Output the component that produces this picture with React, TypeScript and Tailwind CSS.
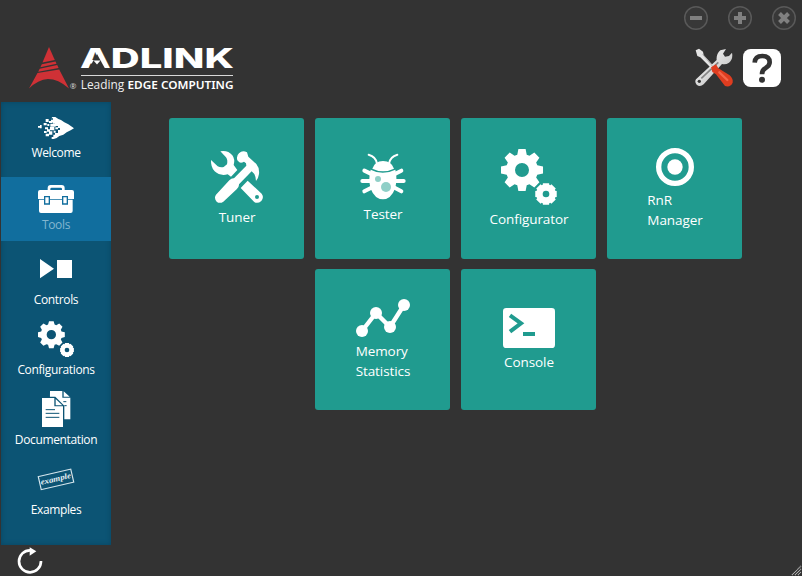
import React from "react";

type IconProps = { box: string; className: string; children: React.ReactNode };

function Icon({ box, className, children }: IconProps) {
  return (
    <svg viewBox={box} className={"block shrink-0 " + className} fill="white">
      {children}
    </svg>
  );
}

function gearPath(cx: number, cy: number, outer: number, inner: number, hole: number, tip: number, root: number) {
  const pts: string[] = [];
  for (let i = 0; i < 8; i++) {
    const a = (i * Math.PI) / 4;
    const steps: [number, number][] = [[-root, inner], [-tip, outer], [tip, outer], [root, inner]];
    for (const [d, r] of steps) {
      pts.push((cx + r * Math.cos(a + d)).toFixed(2) + " " + (cy + r * Math.sin(a + d)).toFixed(2));
    }
  }
  return `M${pts.join("L")}Z M${cx - hole} ${cy}a${hole} ${hole} 0 1 0 ${hole * 2} 0a${hole} ${hole} 0 1 0 ${-hole * 2} 0Z`;
}

const WelcomeIcon = () => (
  <Icon box="114 60 108 72" className="h-[24px] w-[36px]">
    <path d="M157 63h9l9 6 8 3 10 7 12 6 17 12-10 6-12 6-10 7-12 4-8 6-9 3h-6v-6h5v-7h5v-5h9v-9h6v-6h-6v-6h-9v-7h-6v-5h-6v-7h6v-4h-5Z" />
    <path d="M137 69h9v9h-9zM147 75h11v6h-11zM131 81h9v7h-9zM142 84h6v6h-6zM151 83h16v9h-16zM114 90h8v5h-8zM120 87h5v10h-5zM135 94h9v6h-9zM150 93h13v10h-13zM141 100h9v7h-9zM132 105h8v6h-8zM147 106h10v10h-10zM137 113h10v8h-10zM161 104h6v6h-6zM166 94h8v6h-8z" />
  </Icon>
);

const ToolboxIcon = () => (
  <Icon box="114 267 108 84" className="h-[28px] w-[36px]">
    <path d="M143 285v-9q0-9 9-9h33q9 0 9 9v9h-8v-6q0-4-4-4h-27q-4 0-4 4v6Z" />
    <path d="M120 282h96q6 0 6 6v21h-18v-9h-18v9h-36v-9h-18v9h-18v-21q0-6 6-6Z" />
    <path d="M117 311h15v15h18v-15h36v15h18v-15h14v34q0 6-6 6h-89q-6 0-6-6Z" />
    <path d="M136 304h10v18h-10zM190 304h10v18h-10z" />
  </Icon>
);

const ControlsIcon = () => (
  <Icon box="114 54 108 63" className="h-[21px] w-[36px]">
    <path d="M120 57l42 29-42 29zM171 60h45v54h-45z" />
  </Icon>
);

const SmallGears = () => (
  <Icon box="114 240 111 114" className="h-[38px] w-[37px]">
    <path fillRule="evenodd" d={gearPath(154, 284, 41, 32, 14, 0.17, 0.31)} />
    <path fillRule="evenodd" d={gearPath(201, 330, 21.5, 19.5, 7, 0.28, 0.34)} />
  </Icon>
);

const DocumentsIcon = () => (
  <Icon box="126 33 87 108" className="h-[36px] w-[29px]">
    <path d="M150 33h37v20h24v65h-62zM191 34l18 16h-18z" />
    <path d="M123 50h43l27 27v67h-70z" fill="#0c5474" />
    <path d="M126 54h37v25h26v62h-63zM167 57l20 19h-20z" />
    <path d="M137 89h28M137 100h41M137 112h41M190 65h9M193 77h7" stroke="#0c5474" strokeWidth="3" />
  </Icon>
);

const ExampleIcon = () => (
  <Icon box="114 261 108 75" className="h-[25px] w-[36px] overflow-visible">
    <g transform="rotate(-13 168 298)">
      <rect x="118" y="278" width="100" height="40" fill="none" stroke="#d5e6ed" strokeWidth="3.5" />
      <text x="121" y="304" fontSize="24" fontStyle="italic" fontWeight="700" fontFamily="Liberation Serif, serif" textLength="93" lengthAdjust="spacingAndGlyphs" fill="#e5f0f4">example</text>
    </g>
  </Icon>
);

const TunerIcon = () => (
  <Icon box="150 120 162 162" className="size-[54px]">
    <path d="M181 124Q204 120 217 136Q226 148 221 165L232 180L213 200L203 193Q180 199 164 184Q152 172 153 150L173 169Q181 173 191 171L201 163Q204 150 198 142Z" />
    <path fillRule="evenodd" d="M263 212L305 251Q313 262 304 273Q292 283 282 275L242 234ZM285 261a6 6 0 1 0 12 0a6 6 0 1 0-12 0Z" />
    <path d="M232 151Q228 138 237 130Q247 119 261 127L265 140L289 162Q299 174 297 192Q295 206 288 213Q287 199 283 192L275 184L237 223Q238 230 230 238L190 275Q179 282 170 275Q161 265 168 254L208 211Q215 204 222 205L259 167L258 160L252 155Q244 160 238 157Z" />
  </Icon>
);

const BugIcon = () => (
  <Icon box="150 129 138 141" className="h-[47px] w-[46px]">
    <path d="M176 134Q198 140 201 161M262 134Q240 140 237 161" fill="none" stroke="white" strokeWidth="6" strokeLinecap="round" />
    <path d="M187 176Q194 154 219 153Q245 154 252 176Q219 192 187 176Z" />
    <path d="M163 182L188 194M157 213H184M163 244L187 232M274 182L250 194M281 213H254M274 244L251 232" stroke="white" strokeWidth="12" strokeLinecap="round" />
    <path d="M182 179Q218 198 256 179Q263 205 255 236Q243 267 219 268Q194 267 182 236Q174 205 182 179Z" />
    <circle cx="204" cy="207" r="9" fill="#8fcfc7" />
    <circle cx="228" cy="231" r="15" fill="#8fcfc7" />
  </Icon>
);

const LargeGears = () => (
  <Icon box="135 114 174 174" className="size-[58px]">
    <path fillRule="evenodd" d={gearPath(201, 180, 64, 48, 21, 0.17, 0.3)} />
    <path fillRule="evenodd" d={gearPath(273, 252, 33.5, 29.5, 10, 0.28, 0.34)} />
  </Icon>
);

const TargetIcon = () => (
  <Icon box="165 111 120 120" className="size-[40px]">
    <circle cx="225" cy="171" r="49" fill="none" stroke="white" strokeWidth="16" />
    <circle cx="225" cy="171" r="23" />
  </Icon>
);

const GraphIcon = () => (
  <Icon box="135 108 168 120" className="h-[40px] w-[56px]">
    <path d="M156 207L198 153L240 195L282 129" fill="none" stroke="white" strokeWidth="13" />
    <circle cx="156" cy="207" r="18" />
    <circle cx="198" cy="153" r="18" />
    <circle cx="240" cy="195" r="18" />
    <circle cx="282" cy="129" r="18" />
  </Icon>
);

const ConsoleIcon = () => (
  <Icon box="144 138 156 120" className="h-[40px] w-[52px]">
    <rect x="144" y="138" width="156" height="120" rx="10" />
    <path d="M165 160L198 184L165 209" fill="none" stroke="#209b8f" strokeWidth="12" />
    <path d="M204 210h36v12h-36z" fill="#209b8f" />
  </Icon>
);

const Logo = () => (
  <svg viewBox="28 30 208 66" className="h-[66px] w-[208px]" fontFamily="Open Sans, sans-serif">
    <g fill="#cf3136">
      <path d="M49 47L54.8 60L42.5 62.5Z" />
      <path d="M41.8 64.2L55.5 61.5L56.5 63.7L40.4 67.3Z" />
      <path d="M39.7 68.7L57.2 65L58.6 68L38.2 71.7Z" />
      <path d="M37.5 73L59.2 69.5L69 88.4Q58 79 48 79Q38 79.5 29 88.6Z" />
    </g>
    <text x="80" y="68" fontSize="27.2" fontWeight="800" fill="white" fontFamily="Inter, sans-serif" textLength="154" lengthAdjust="spacingAndGlyphs">ADLINK</text>
    <path d="M97 54L89 68.5H105Z" fill="#333333" />
    <path d="M93.5 60.5H100.5L97 64.5Z" fill="white" />
    <path d="M81 75.5H233" stroke="#d8d8d8" strokeWidth="1" />
    <text x="69.7" y="88.5" fontSize="8" fill="#ddd">®</text>
    <text x="80.7" y="89" fontSize="12" fill="#eee" textLength="43.5" lengthAdjust="spacingAndGlyphs">Leading</text>
    <text x="127.5" y="89" fontSize="11.5" fontWeight="600" fill="white" fontFamily="Noto Sans, sans-serif" textLength="106" lengthAdjust="spacingAndGlyphs">EDGE COMPUTING</text>
  </svg>
);

const WindowButton = ({ d }: { d: string }) => (
  <svg viewBox="0 0 26 26" className="size-[26px]">
    <circle cx="13" cy="13" r="11.3" fill="#383838" stroke="#595959" strokeWidth="1.5" />
    <path d={d} stroke="#808080" strokeWidth="4" fill="none" />
  </svg>
);

const SettingsIcon = () => (
  <svg viewBox="105 144 117 120" className="h-[40px] w-[39px]">
    <defs>
      <linearGradient id="steel" x1="0" y1="0" x2="1" y2="1">
        <stop offset="0" stopColor="#fff" />
        <stop offset="1" stopColor="#b5b5b5" />
      </linearGradient>
    </defs>
    <path d="M108 238L170 180Q168 163 181 151L198 147L189 161L195 170L207 168L216 158Q220 177 207 188Q197 195 186 192L131 253Q120 262 110 254Q103 246 108 238Z" fill="url(#steel)" />
    <path d="M124 235L175 187" stroke="#858585" strokeWidth="5" />
    <circle cx="118" cy="244" r="5" fill="#333" />
    <path d="M107 151L117 146L129 155L131 165L166 204L159 210L121 172L112 168Z" fill="#e4e4e4" />
    <path d="M128 163L162 204" stroke="#969696" strokeWidth="2" />
    <path d="M153 202L168 193L175 205L209 226Q220 236 218 248Q211 263 195 258L168 223L157 216Z" fill="#df3d20" />
    <path d="M178 217L202 240" stroke="#f56549" strokeWidth="7" strokeLinecap="round" />
  </svg>
);

const HelpIcon = () => (
  <svg viewBox="249 147 114 114" className="size-[38px]">
    <rect x="249" y="147" width="114" height="114" rx="23" fill="white" />
    <path d="M284 188Q285 168 307 168Q329 168 329 187Q329 197 317 204Q306 210 306 223" fill="none" stroke="#333" strokeWidth="14" />
    <circle cx="306" cy="239" r="9" fill="#333" />
  </svg>
);

const navigation = [
  { label: "Welcome", icon: <WelcomeIcon />, row: "h-[75px] pt-[14px]", gap: "mt-[3px]" },
  { label: "Tools", icon: <ToolboxIcon />, row: "h-[64px] bg-[#116e9e] pt-[8px] text-[#83b6cf]", gap: "mt-[2px]" },
  { label: "Controls", icon: <ControlsIcon />, row: "h-[69px] pt-[17px]", gap: "mt-[11px]" },
  { label: "Configurations", icon: <SmallGears />, row: "h-[70px] pt-[10px]", gap: "mt-[2px]" },
  { label: "Documentation", icon: <DocumentsIcon />, row: "h-[70px] pt-[11px]", gap: "mt-[3px]" },
  { label: "Examples", icon: <ExampleIcon />, row: "h-[70px] pt-[17px]", gap: "mt-[8px]" },
];

const tools = [
  [
    { label: "Tuner", icon: <TunerIcon />, pad: "pt-[32px]", gap: "mt-[3px]" },
    { label: "Tester", icon: <BugIcon />, pad: "pt-[35px]", gap: "mt-[4px]" },
    { label: "Configurator", icon: <LargeGears />, pad: "pt-[30px]", gap: "mt-[3px]" },
    { label: "RnR\nManager", icon: <TargetIcon />, pad: "pt-[29px]", gap: "mt-[3px]" },
  ],
  [
    { label: "Memory\nStatistics", icon: <GraphIcon />, pad: "pt-[29px]", gap: "mt-[3px]" },
    { label: "Console", icon: <ConsoleIcon />, pad: "pt-[39px]", gap: "mt-[4px]" },
  ],
];

export default function App() {
  return (
    <div className="flex h-[576px] w-[802px] flex-col overflow-hidden bg-[#333333] font-['Open_Sans',sans-serif] text-white">
      <header className="flex h-[102px] shrink-0 justify-between pl-[28px]">
        <div className="pt-[30px]"><Logo /></div>
        <div className="flex flex-col items-end pt-[5px]">
          <div className="flex gap-[18px] pr-[5px]">
            <WindowButton d="M7 13H19" />
            <WindowButton d="M7 13H19M13 7V19" />
            <WindowButton d="M8.5 8.5L17.5 17.5M17.5 8.5L8.5 17.5" />
          </div>
          <div className="mt-[17px] flex gap-[9px] pr-[21px]">
            <SettingsIcon />
            <div className="pt-[1px]"><HelpIcon /></div>
          </div>
        </div>
      </header>
      <div className="flex h-[443px] shrink-0 pl-px">
        <nav className="w-[110px] shrink-0 bg-[#0c5474] shadow-[inset_0_0_5px_#094561]">
          {navigation.map((item) => (
            <div key={item.label} className={"flex flex-col items-center " + item.row}>
              {item.icon}
              <span className={"text-[12px] leading-[20px] tracking-[-0.36px] whitespace-nowrap " + item.gap}>{item.label}</span>
            </div>
          ))}
        </nav>
        <main className="flex flex-1 flex-col items-center gap-[10px] pt-[16px] pr-[2px]">
          {tools.map((row, i) => (
            <div key={i} className="flex gap-[11px]">
              {row.map((tool) => (
                <div key={tool.label} className={"flex h-[141px] w-[135px] flex-col items-center rounded-[3px] bg-[#209b8f] pl-px " + tool.pad}>
                  {tool.icon}
                  <span className={"text-[13.5px] leading-[20px] tracking-[-0.08px] whitespace-pre " + tool.gap}>{tool.label}</span>
                </div>
              ))}
            </div>
          ))}
        </main>
      </div>
      <footer className="flex h-[31px] items-end justify-between">
        <svg viewBox="54 504 75 75" className="mb-[3px] ml-[18px] size-[25px] overflow-visible">
          <path d="M123 543A33 33 0 1 1 91 511" fill="none" stroke="white" strokeWidth="8" />
          <path d="M89 502L109 514L89 527Z" fill="white" />
        </svg>
        <svg viewBox="0 0 12 12" className="size-[12px]" stroke="#bbb" strokeWidth="1.2" strokeDasharray="1 .5">
          <path d="M2 11L11 2M5 11L11 5M8 11L11 8" />
        </svg>
      </footer>
    </div>
  );
}
